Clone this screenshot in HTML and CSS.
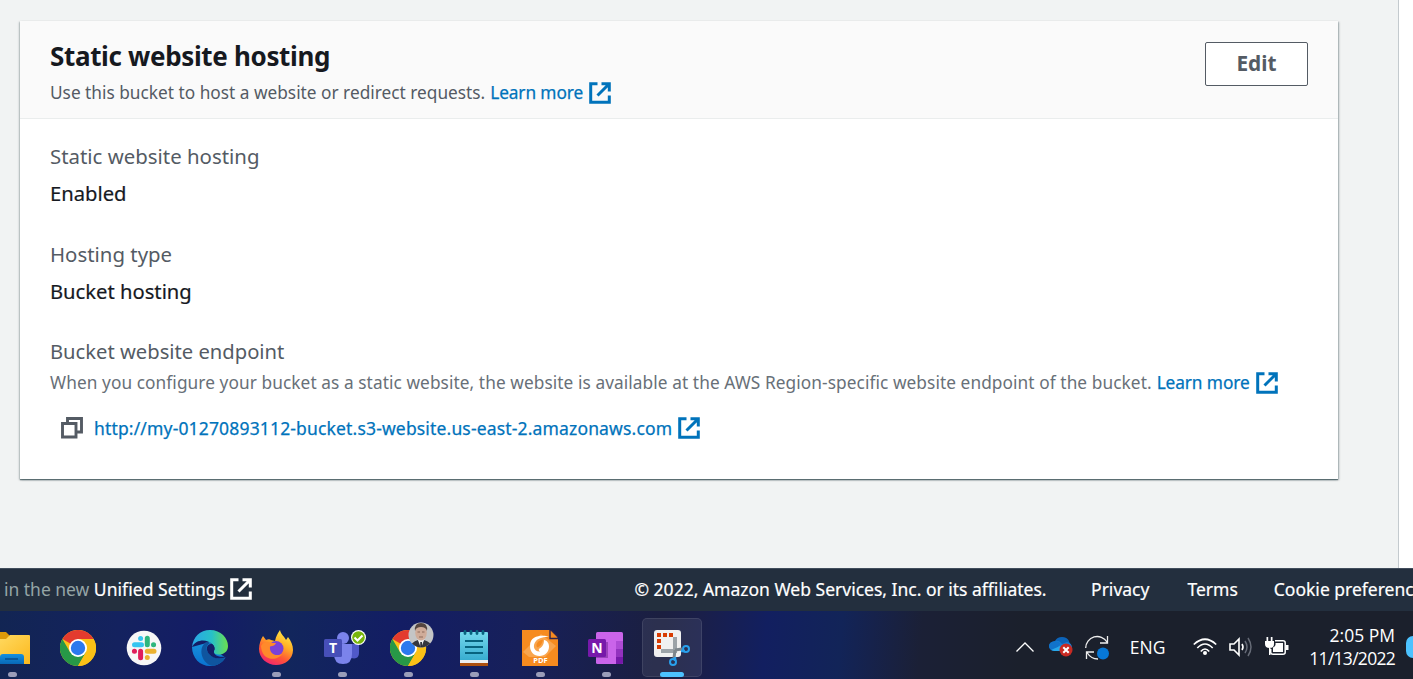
FILE: index.html
```html
<!DOCTYPE html>
<html lang="en">
<head>
<meta charset="utf-8">
<title>Static website hosting</title>
<link rel="stylesheet" href="styles.css">
</head>
<body>
<svg class="sprite" width="0" height="0" aria-hidden="true">
  <symbol id="external" viewBox="0 0 22 22">
    <path d="M8.500 1.700H1.700v18.600h18.600V13.500M12.500 1.700h7.800v7.800M20 2L8.500 13.500" fill="none" stroke="currentColor" stroke-width="3"/>
  </symbol>
</svg>
<main class="console">
  <div class="content">
    <section class="card">
      <header class="card-header">
        <div>
          <h2 class="title">Static website hosting</h2>
          <p class="description"><span>Use this bucket to host a website or redirect requests.</span><a class="link learn"><span>Learn more</span><svg class="external"><use href="#external"/></svg></a></p>
        </div>
        <button class="edit">Edit</button>
      </header>
      <dl class="fields">
        <dt class="label">Static website hosting</dt>
        <dd class="value">Enabled</dd>
        <dt class="label">Hosting type</dt>
        <dd class="value">Bucket hosting</dd>
        <dt class="label endpoint-label">Bucket website endpoint</dt>
        <dd class="hint"><span>When you configure your bucket as a static website, the website is available at the AWS Region-specific website endpoint of the bucket.</span><a class="link learn"><span>Learn more</span><svg class="external"><use href="#external"/></svg></a></dd>
        <dd class="endpoint">
          <svg class="copy" viewBox="0 0 22 22"><path d="M6.500 6V1.500h14V15H16M1.500 6.500h13.500V20H1.500z" fill="none" stroke="currentColor" stroke-width="2.900"/></svg>
          <a class="link url"><span>http://my-01270893112-bucket.s3-website.us-east-2.amazonaws.com</span><svg class="external"><use href="#external"/></svg></a>
        </dd>
      </dl>
    </section>
  </div>
  <aside class="side"></aside>
</main>
<footer class="footer">
  <div class="feedback"><span class="muted">in the new</span><a>Unified Settings</a><svg class="external"><use href="#external"/></svg></div>
  <div class="legal"><span class="copyright">© 2022, Amazon Web Services, Inc. or its affiliates.</span><a class="privacy">Privacy</a><a class="terms">Terms</a><a>Cookie preferences</a></div>
</footer>
<nav class="taskbar">
  <div class="apps">
    <div class="app">
      <svg viewBox="0 0 36 36"><defs><linearGradient id="fo" x2="1" y2="1"><stop stop-color="#ffdc66"/><stop offset="1" stop-color="#fcb81c"/></linearGradient><linearGradient id="fb" y2="1" x2="0"><stop stop-color="#1590e0"/><stop offset="1" stop-color="#0868b6"/></linearGradient></defs><path d="M0 4q0-2 2-2h10l4 4v5H0z" fill="#dd9a09"/><path d="M0 9h12l4-4h19q1 0 1 1v28H0z" fill="url(#fo)"/><path d="M6 34V27q0-3 3-3h18q3 0 3 3v7z" fill="url(#fb)"/><path d="M11 29h13" stroke="#074e8c" stroke-width="1.500"/></svg><i class="dot"></i></div>
    <div class="app"><svg viewBox="0 0 36 36"><g id="chrome"><circle cx="18" cy="18" r="18" fill="#fbc116"/><path d="M18 18L2.400 9A18 18 0 0 1 33.600 9z" fill="#e33b2e"/><path d="M2.400 9A18 18 0 0 0 18 36l7.800-13.500L18 18l-7.800 4.500z" fill="#279847"/><path d="M18 9h15.600A18 18 0 0 1 18 36l7.800-13.500z" fill="#fbc116"/><circle cx="18" cy="18" r="9" fill="#fff"/><circle cx="18" cy="18" r="7.200" fill="#2b79ee"/></g></svg></div>
    <div class="app"><svg viewBox="0 0 36 36"><circle cx="18" cy="18" r="17.300" fill="#f7f7f7"/><g stroke-width="5" stroke-linecap="round"><path d="M8.500 14.800h7" stroke="#36c5f0"/><path d="M14.600 8.500v.1" stroke="#36c5f0"/><path d="M21.300 8.300v6.500M27.600 14.800h-.1" stroke="#2eb67d"/><path d="M14.600 21.300v6.500M8.400 21.300h.1" stroke="#e01e5a"/><path d="M21.300 21.300h6.700M21.300 27.600v-.1" stroke="#ecb22e"/></g></svg></div>
    <div class="app"><svg viewBox="0 0 36 36"><defs><linearGradient id="e1" x1="0" x2="1"><stop stop-color="#2aa5e8"/><stop offset=".55" stop-color="#27c0c8"/><stop offset="1" stop-color="#6be04e"/></linearGradient><linearGradient id="e2" x2="0" y2="1"><stop stop-color="#1790dc"/><stop offset="1" stop-color="#0a72d0"/></linearGradient></defs><path d="M0 17C0 28 8 36 18 36c7 0 12-3 15.500-8.500L22 20l-4-8z" fill="url(#e2)"/><path d="M14 12C6 18 9 31 18 35.300 25 37 31 32 33.500 27 31 29 24 30 18 25 14 21 13 16 18 13z" fill="#0f559f"/><path d="M0 17C1 7 8 0 18 0c11 0 18 8 18 16 0 6-5 9-10 8.500-4-.4-5-2-4-3.500 1-1.500 1-5-2-7C15 9 4 9 0 17z" fill="url(#e1)"/><path d="M20 14c-5-1-7 5-3 10 4 4.500 10 5.500 16 3.500q1-.5 0-1c-4 1-12-.5-11-5.500 1-2 .5-5.500-2-7z" fill="#131f68"/></svg></div>
    <div class="app"><svg viewBox="0 0 36 36"><defs><linearGradient id="x1" x1=".8" x2=".3" y2="1"><stop stop-color="#fff04a"/><stop offset=".4" stop-color="#ffad25"/><stop offset=".7" stop-color="#ff5635"/><stop offset="1" stop-color="#f12472"/></linearGradient></defs><path d="M5 6l3 4c2-1 4-1 5 0l4 1c1-5 3-8 5-11 1 5 5 7 6 10l2-3c3 4 5 8 5 13 0 9-8 15-17 15S1 28 1 19C1 14 3 9 5 6z" fill="url(#x1)"/><circle cx="18" cy="18.500" r="7.500" fill="#7a42d8"/><path d="M3 16c2-4 6-5 10-3h5q-1 3-6 3.500c-1 7 6 11 12.500 7-3 6-15 8-19.500 0-2-4-2-7.500-2-7.500z" fill="#ff8a2b"/></svg><i class="dot"></i></div>
    <div class="app"><svg class="teams" viewBox="0 0 42 36"><circle cx="19" cy="8" r="6" fill="#7b83eb"/><path d="M25 14h10v9q0 7-8 5z" fill="#5059c9"/><path d="M11 14h17v10q0 10-9 10t-9-10z" fill="#7b83eb"/><rect y="9" width="18" height="18" rx="1.500" fill="#474fb8"/><circle cx="34.500" cy="7.500" r="7.500" fill="#fff"/><circle cx="34.500" cy="7.500" r="6.300" fill="#78b50b"/><path d="M30.500 7.500l3 3 5-5" stroke="#fff" stroke-width="2" fill="none"/><text class="glyph" x="9" y="22.800" font-size="14">T</text></svg><i class="dot"></i></div>
    <div class="app"><svg class="chrome-user" viewBox="0 0 44 44"><use href="#chrome" x="0" y="8"/><clipPath id="av"><circle cx="31" cy="13" r="12.500"/></clipPath><g clip-path="url(#av)"><path d="M18 0h26v26H18z" fill="#c4c5c6"/><path d="M20 26q1-6 8-8h6q7 2 9 8z" fill="#34363e"/><path d="M27.500 17h7L31 26z" fill="#eee"/><path d="M30.300 20h1.600v5h-1.600z" fill="#20212a"/><ellipse cx="31" cy="10.500" rx="5.800" ry="8" fill="#d0ac99"/><path d="M25 9q-1-8 6-8t6 8q-1-4-6-4t-6 4z" fill="#55463f"/><path d="M27.500 10h2.500m2 0h2.500M29 15h4" stroke="#8d6a5b" stroke-width="1"/></g></svg><i class="dot"></i></div>
    <div class="app"><svg viewBox="0 0 36 36"><defs><linearGradient id="np" x2="0" y2="1"><stop stop-color="#75d9ed"/><stop offset="1" stop-color="#38add0"/></linearGradient></defs><path d="M4 29h28v7H4z" fill="#ac500f"/><path d="M4 27h28v6H4z" fill="#eee"/><path d="M4 3q0-1 1-1h26q1 0 1 1v27H4z" fill="url(#np)"/><path d="M9 1.500v2m6-2v2m6-2v2m6-2v2" stroke="#07637e" stroke-width="2.800" stroke-linecap="round"/><path d="M9 11h18M9 17h18M9 23h18" stroke="#07637e" stroke-width="1.800"/></svg><i class="dot"></i></div>
    <div class="app"><svg viewBox="0 0 36 36"><path d="M0 0h28l8 8v28H0z" fill="#f68b1f"/><path d="M28 0h1l7 7v1.500h-8z" fill="#f68b1f" stroke="#2c2450" stroke-width="1.400"/><path d="M1 22L19 4l15 12-11 11H7z" fill="#f9a54d"/><path d="M27 6.500C22 5.500 8 4 8 16c0 6 4 10 9.500 10S27 22 27 16.500c0-3.500-2-6-5-6.500 0 5-2 7-4.500 8.500-1 .6-1 2 .5 3-6 .5-8-6-4-10.500C17 7.500 22 7 27 6.500z" fill="#fff"/><path d="M14.500 14.500q1-4 6.500-5-1 6-5.500 8-1.500-1-1-3z" fill="#f68b1f"/><text class="glyph" x="18.500" y="33" font-size="7.500">PDF</text></svg><i class="dot"></i></div>
    <div class="app"><svg viewBox="0 0 36 36"><rect x="8" y="2" width="27" height="32" rx="1.500" fill="#ca64ea"/><path d="M28 11h7v8h-7z" fill="#ae4bd5"/><path d="M28 19h7v8h-7z" fill="#9332bf"/><path d="M28 27h7v6l-1 1h-6z" fill="#7719aa"/><path d="M8 12h12v16H8z" fill="#9a42bb"/><rect y="9" width="18" height="18" rx="1.500" fill="#7719aa"/><text class="glyph" x="9" y="22.800" font-size="14">N</text></svg><i class="dot"></i></div>
    <div class="app active"><svg class="snip" viewBox="0 0 36 36"><rect width="27" height="27" rx="3" fill="#f0f0f0"/><path d="M3 3h4v4H3zM9 3h4v4H9zM15 3h4v4h-4zM3 9h4v4H3zM3 15h4v4H3z" fill="#d83b01"/><path d="M21 7v14H7" fill="none" stroke="#9ca3a8" stroke-width="4"/><path d="M21 20l-1 8M21 20l7-1" stroke="#7d868c" stroke-width="3"/><circle cx="19" cy="32" r="3" fill="none" stroke="#28a0ed" stroke-width="2"/><circle cx="32" cy="19" r="3" fill="none" stroke="#28a0ed" stroke-width="2"/><path d="M21 27v4M27 21h4" stroke="#28a0ed" stroke-width="2.500"/></svg><i class="bar"></i></div>
  </div>
  <div class="tray">
    <svg class="chev" viewBox="0 0 18 10"><path d="M.5 9.500L9 1l8.500 8.500" fill="none" stroke="#fff" stroke-width="1.300"/></svg>
    <svg class="cloud" viewBox="0 0 24 20"><path d="M5 14Q0 13 0 9t6-5q2-4 7-4t7 4l2 7z" fill="#0c63b8"/><path d="M6 4q4-1 7 3l5-2q5 1 5 6H9z" fill="#1580d8"/><path d="M5 14Q0 13 0 9t6-5q4 0 6 3L4 14z" fill="#1173cb"/><path d="M2 13l9-4 3 5H5z" fill="#28a8ea"/><circle cx="17" cy="13" r="6.500" fill="#c82a23"/><path d="M14.300 10.300l5.400 5.400m0-5.400l-5.400 5.400" stroke="#fff" stroke-width="2"/></svg>
    <svg class="sync" viewBox="0 0 24 25"><path d="M.7 13A11.500 11.500 0 0 1 22 7M22.500 1v7H15M13 24Q6 24 2 17.500M1.500 24v-7H9" fill="none" stroke="#eee" stroke-width="1.300"/><circle cx="18" cy="18.500" r="6" fill="#0778d7"/></svg>
    <span class="lang">ENG</span>
    <svg class="wifi" viewBox="0 0 24 18"><path d="M.8 6.500q11.200-10.500 22.400 0M4.300 10q7.700-8 15.400 0M7.800 13.500q4.200-5 8.400 0" fill="none" stroke="#fff" stroke-width="1.700"/><circle cx="12" cy="15" r="2" fill="#fff"/></svg>
    <svg class="sound" viewBox="0 0 24 20"><path d="M1 7h4l5-5v16l-5-5H1z" fill="none" stroke="#fff" stroke-width="1.600"/><path d="M13 7q2 3 0 6" fill="none" stroke="#fff" stroke-width="1.600"/><path d="M16 4q4 6 0 12M19 1q6 9 0 18" fill="none" stroke="#666b77" stroke-width="1.500"/></svg>
    <svg class="battery" viewBox="0 0 24 20"><path d="M10 3.700h8q2.200 0 2.200 2v9.600q0 2-2.200 2H8q-2.300 0-2.300-2V12" fill="none" stroke="#fff" stroke-width="1.500"/><path d="M10.500 6h7.500v9H8v-4.500q3-1.500 2.500-4.500z" fill="#fff"/><path d="M21 8h2.500v5H21zM0 4h9v3q0 4-4.500 4T0 7zM1.500 0h1.700v5H1.500zM5.800 0h1.700v5H5.800zM4 10h1.500v8H4z" fill="#fff"/></svg>
    <div class="clock"><span class="time">2:05 PM</span><span class="date">11/13/2022</span></div>
    <i class="notice"></i>
  </div>
</nav>
</body>
</html>
```
FILE: styles.css
```css
* { box-sizing: border-box; }
body { margin: 0; width: 1413px; height: 679px; overflow: hidden; display: flex; flex-direction: column; font-family: "Noto Sans", "Open Sans", sans-serif; color: #16191f; background: #f2f3f3; }
h2, p, dl, dd { margin: 0; }
span, a { white-space: nowrap; }
.sprite { position: absolute; }
.console { height: 568px; display: flex; }
.content { width: 1399px; padding: 21px 0 0 20px; background: #f1f3f3; border-right: 1px solid #c4cace; }
.side { flex: 1; background: #fff; }
.card { width: 1318px; height: 458px; background: #fff; box-shadow: 0 1px 1px rgba(0,28,36,.45), 1px 1px 2px rgba(0,28,36,.3), -1px 1px 2px rgba(0,28,36,.2); }
.card-header { height: 98px; padding: 21px 30px 0; display: flex; justify-content: space-between; background: #fafafa; border-bottom: 1px solid #eaeded; }
.title { margin-top: -2px; font-size: 26px; line-height: 32px; font-weight: 700; letter-spacing: -.34px; }
.description { display: flex; align-items: center; margin-top: 8px; font-size: 17.280px; line-height: 26px; color: #545b64; }
.link { display: flex; align-items: center; color: #0073bb; margin-left: 5px; -webkit-text-stroke: .25px; }
.learn { letter-spacing: -.1px; }
.url { letter-spacing: .16px; }
.external { width: 22px; height: 22px; flex: none; margin-left: 6px; }
.edit { width: 103px; height: 44px; padding: 0 0 2px; background: #fff; border: 1px solid #545b64; border-radius: 2px; color: #545b64; font: 700 20.800px "Noto Sans", sans-serif; }
.fields { padding: 22px 30px 0; }
.label { font-size: 20.400px; line-height: 30px; color: #545b64; }
.endpoint-label { font-size: 20.200px; }
.value { font-size: 20.200px; line-height: 30px; margin: 7px 0 30.500px; -webkit-text-stroke: .2px; }
.hint { display: flex; align-items: center; font-size: 17.280px; line-height: 26px; margin-top: 4px; color: #687078; letter-spacing: .075px; }
.endpoint { display: flex; align-items: center; height: 26px; margin: 18.500px 0 0 11px; font-size: 17.500px; }
.copy { width: 22px; height: 22px; color: #545b64; margin-right: 6px; }
.footer { height: 43px; flex: none; display: flex; align-items: center; padding: 0 0 2px 4px; font-size: 17.500px; color: #fff; background: #232f3e; border-top: 1px solid #414d5c; }
.feedback { width: 630.500px; flex: none; display: flex; align-items: center; }
.feedback a { letter-spacing: .05px; }
.feedback a, .legal { -webkit-text-stroke: .2px; }
.feedback .external { margin-left: 5px; }
.legal { display: flex; align-items: center; }
.muted { color: #95a5a6; margin-right: 4.500px; letter-spacing: -.02px; }
.copyright { margin-right: 44.500px; }
.privacy { margin-right: 38px; }
.terms { margin-right: 36px; }
.taskbar { height: 68px; flex: none; display: flex; justify-content: space-between; background: linear-gradient(95deg, #122553 0, #14225f 120px, #141c66 210px, #12265c 290px, #131d64 400px, #17205a 520px, #1b1f40 660px, #1a1f4a 700px, #121f60 765px, #122458 840px, #16224c 870px, #1b2036 920px, #1b202c 1020px, #1b202c 100%); }
.apps { display: flex; padding: 7px 0 0 0; margin-left: -18px; gap: 6px; }
.app { position: relative; width: 60px; height: 59px; display: flex; justify-content: center; padding-top: 12px; }
.app svg { width: 36px; height: 36px; flex: none; }
.app .teams { width: 42px; margin-left: 5px; }
.app .chrome-user { width: 44px; height: 44px; margin: -8px 0 0 8px; }
.glyph { fill: #fff; font-family: "Open Sans", sans-serif; font-weight: 700; text-anchor: middle; }
.active { background: rgba(255,255,255,.08); border: 1px solid rgba(255,255,255,.09); border-radius: 5px; padding-top: 11px; }
.dot { position: absolute; left: 26px; top: 54px; width: 9px; height: 5px; border-radius: 3px; background: #9a9db9; }
.bar { position: absolute; left: 17px; top: 53px; width: 24px; height: 5px; border-radius: 3px; background: #4cc2ff; }
.tray { display: flex; align-items: center; padding-top: 4px; font-family: "Open Sans", sans-serif; font-size: 17.500px; color: #fff; }
.chev { width: 18px; height: 10px; margin-right: 15px; }
.cloud { width: 24px; height: 20px; margin-right: 12px; }
.sync { width: 24px; height: 25px; margin-right: 21px; }
.lang { width: 36px; margin-right: 27px; }
.wifi { width: 24px; height: 18px; margin-right: 12px; }
.sound { width: 24px; height: 20px; margin-right: 12px; }
.battery { width: 24px; height: 20px; margin-right: 20.500px; }
.clock { display: flex; flex-direction: column; align-items: flex-end; line-height: 23px; }
.date { letter-spacing: -.72px; }
.notice { width: 7px; height: 22px; margin-left: 11px; border-radius: 22px 0 0 22px; background: #4cc2ff; }
```
